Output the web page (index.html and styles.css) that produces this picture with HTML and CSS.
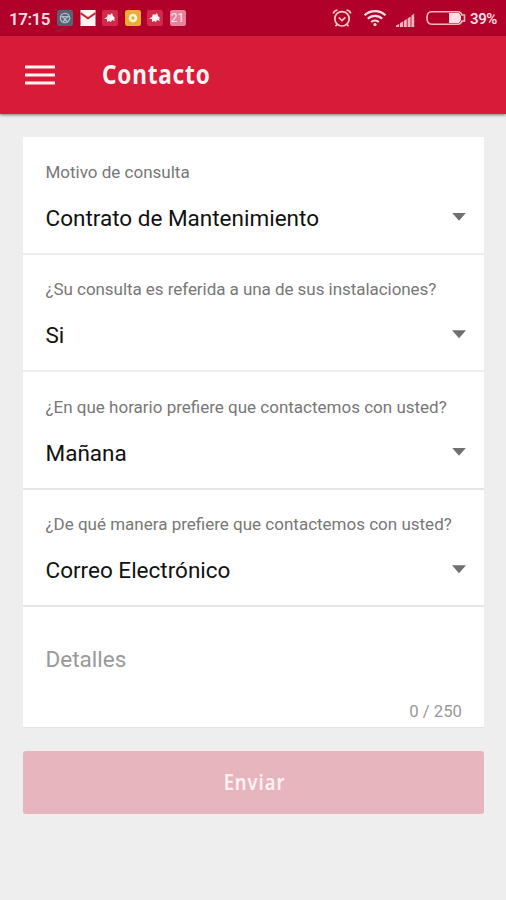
FILE: index.html
```html
<!DOCTYPE html>
<html lang="es">
<head>
<meta charset="utf-8">
<title>Contacto</title>
<link rel="stylesheet" href="styles.css">
</head>
<body>
<div class="status">
  <span class="clock">17:15</span>
  <div class="notes">
    <svg class="note" viewBox="0 0 16 16"><rect width="16" height="16" rx="2.5" fill="#536575"/><circle cx="8" cy="8" r="4.6" fill="none" stroke="#b4bec8" stroke-width="1.4"/><path d="M5 6.5h6L8 9zM6 12l2-3 2.5 3" fill="none" stroke="#b4bec8" stroke-width="1.2"/></svg>
    <svg class="note" viewBox="0 0 16 16"><path d="M.5 0h15v16H.5z" fill="#fff6f4"/><path d="M.5 3.2L8 8.3l7.500-5.100" fill="none" stroke="#c92632" stroke-width="2"/></svg>
    <svg class="note" viewBox="0 0 16 16"><rect width="16" height="16" rx="2.5" fill="#d32a4c"/><path d="M2 9l3-2 1-3 2 1 2-2 1 3 2 2-1 1 1 2-3-1-1 2-2-1-2 1v-3z" fill="#fff0f1"/></svg>
    <svg class="note" viewBox="0 0 16 16"><rect width="16" height="16" rx="2.5" fill="#edac32"/><circle cx="8" cy="8" r="3" fill="none" stroke="#fff6dc" stroke-width="2.6"/></svg>
    <svg class="note" viewBox="0 0 16 16"><rect width="16" height="16" rx="2.5" fill="#d32a4c"/><path d="M2 9l3-2 1-3 2 1 2-2 1 3 2 2-1 1 1 2-3-1-1 2-2-1-2 1v-3z" fill="#fff0f1"/></svg>
    <span class="note date">21</span>
  </div>
  <svg class="alarm" viewBox="0 0 20 20"><circle cx="10" cy="10.8" r="7.2"/><path d="M1.200 5.500Q2 2.500 5.500 2M18.800 5.500Q18 2.500 14.500 2M6.800 9.500l3.200 3 3.400-3.200M5 16.500L3.500 18.300M15 16.500l1.500 1.800"/></svg>
  <svg class="wifi" viewBox="0 0 24 18"><path d="M1.500 6.300c6-5.600 15-5.600 21 0M4.800 9.800c4.200-4 10.200-4 14.400 0M8.200 13c2.200-2 5.400-2 7.600 0"/><circle cx="12" cy="15.600" r="1.600"/></svg>
  <svg class="signal" viewBox="0 0 20 14"><path d="M0 14v-1.500L3.200 11v3zM4 14v-4l3-1.600V14zM7.800 14V8l3-2v8zM11.600 14V5.500l3-2V14zM15.400 14V2.500l2.800-2V14z"/></svg>
  <svg class="battery" viewBox="0 0 40 16"><path d="M5.500 1.800H32Q35 1.800 36 5h2.500v6H36q-1 3.200-4 3.200H5.500Q1 14.200 1 8t4.500-6.200z" fill="none" stroke="#f7b5b5" stroke-width="1.600"/><path d="M23 3h10l2 3v4l-2 3H23z" fill="#ffdfe3"/></svg>
  <span class="percent">39%</span>
</div>
<header class="bar">
  <svg class="menu" viewBox="0 0 30 20"><path d="M0 2h30M0 10h30M0 18h30"/></svg>
  <h1 class="title">Contacto</h1>
</header>
<main class="page">
  <section class="card">
    <div class="field soft"><div class="label">Motivo de consulta</div><div class="value">Contrato de Mantenimiento</div><i class="arrow"></i></div>
    <div class="field soft"><div class="label tight">¿Su consulta es referida a una de sus instalaciones?</div><div class="value">Si</div><i class="arrow"></i></div>
    <div class="field"><div class="label">¿En que horario prefiere que contactemos con usted?</div><div class="value">Mañana</div><i class="arrow"></i></div>
    <div class="field"><div class="label">¿De qué manera prefiere que contactemos con usted?</div><div class="value">Correo Electrónico</div><i class="arrow"></i></div>
    <div class="details"><div class="hint">Detalles</div><div class="count">0 / 250</div></div>
  </section>
  <button class="send"><span class="send-text">Enviar</span></button>
</main>
</body>
</html>
```

FILE: styles.css
```css
* { box-sizing: border-box; }
body { margin: 0; height: 900px; background: #eee; font-family: Roboto, sans-serif; overflow: hidden; }
.status { height: 36px; background: #b1002a; display: flex; align-items: center; padding: 0 8px 0 9px; color: #ffdde1; }
.clock { width: 48px; font-size: 17px; font-weight: 600; letter-spacing: -.5px; white-space: nowrap; padding-top: 1px; }
.notes { display: flex; gap: 6.5px; flex: 1; }
.note { width: 16px; height: 16px; display: block; }
.date { background: #e5849b; border-radius: 2.5px; color: #ffe9ed; font-size: 12px; line-height: 16px; text-align: center; }
.alarm { width: 20px; height: 20px; margin-right: 11px; fill: none; stroke: #ffc9c8; stroke-width: 1.7; }
.wifi { width: 24px; height: 18px; margin-right: 9px; fill: none; stroke: #ffdfe1; stroke-width: 2.2; }
.wifi circle { fill: #ffdfe1; stroke: none; }
.signal { width: 20px; height: 14px; margin: 4px 10px 0 0; fill: #f5b5bd; }
.battery { width: 40px; height: 16px; margin-right: 4px; }
.percent { width: 28px; font-size: 15px; font-weight: 600; letter-spacing: -.4px; padding-top: 1px; }
.bar { height: 78px; background: #d71b38; display: flex; align-items: center; padding-left: 25px; box-shadow: 0 1px 3px rgba(0,0,0,.5); }
.menu { width: 30px; height: 20px; fill: none; stroke: #fff4f1; stroke-width: 3.1; }
.title { margin: -2px 0 0 47px; font: 700 27.5px/36px "Noto Sans", sans-serif; letter-spacing: 1px; color: #fff4f2; transform: scaleX(.82); transform-origin: left; }
.page { padding: 23px 22px 0 23px; }
.card { background: #fff; box-shadow: 0 1px 1px rgba(0,0,0,.04); }
.field { height: 117.5px; border-bottom: 2px solid #e4e5e5; padding: 24.6px 18px 0 22.5px; display: grid; grid-template-columns: 1fr 14px; grid-template-rows: 20px 30px; row-gap: 21.2px; align-items: center; align-content: start; }
.soft { border-bottom-color: #eee; }
.label { grid-column: 1 / 3; font-size: 17px; line-height: 20px; color: #777; white-space: nowrap; }
.tight { letter-spacing: -.05px; }
.value { font-size: 22.5px; line-height: 30px; color: #111; white-space: nowrap; }
.arrow { width: 14px; height: 8px; background: #707070; clip-path: polygon(0 0, 100% 0, 50% 100%); margin-top: -2px; }
.details { height: 120px; padding: 37px 22px 0 22.5px; color: #999; }
.hint { font-size: 22.5px; line-height: 30px; }
.count { font-size: 16.7px; line-height: 20px; margin-top: 28px; text-align: right; }
.send { display: flex; align-items: center; justify-content: center; width: 100%; height: 63px; margin-top: 24px; border: 0; border-radius: 3px; background: #e7b5be; color: #fff1f2; font: 600 21px/30px "Noto Sans", sans-serif; }
.send-text { letter-spacing: 1.2px; transform: translate(1px, -1px) scaleX(.87); }
```
